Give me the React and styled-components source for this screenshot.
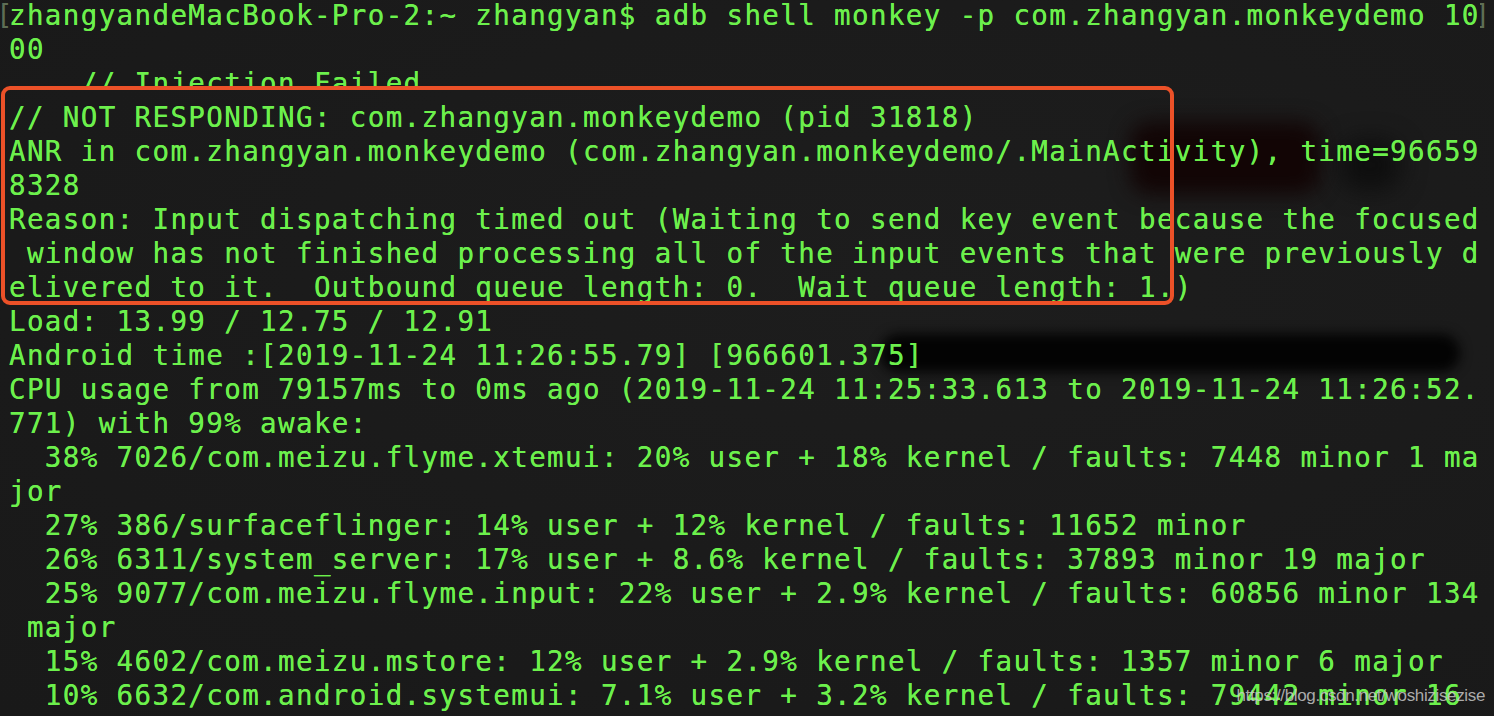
import React from "react";
import styled, { createGlobalStyle } from "styled-components";

const Global = createGlobalStyle`
  html, body { margin: 0; padding: 0; background: #1b1b1b; overflow: hidden; }
  #root { width: 1494px; height: 716px; }
`;

const Screen = styled.div`
  position: relative;
  width: 1494px;
  height: 716px;
  overflow: hidden;
  background: radial-gradient(ellipse at 60% 40%, #1d1d1d 0%, #1a1a1a 70%, #191919 100%);
`;

const Output = styled.div`
  position: relative;
  z-index: 2;
  display: flex;
  flex-direction: column;
  margin-top: -2px;
  padding-left: 9px;
  font-family: "DejaVu Sans Mono", "Liberation Mono", monospace;
  font-size: 27.5px;
  letter-spacing: 1.38px;
  line-height: 34px;
  color: #6cf04c;
  text-shadow: 0 0 0.4px #6cf04c;
`;

const Line = styled.div`
  height: 34px;
  flex: none;
  white-space: pre;
`;

const ClippedLine = styled(Line)`
  height: 22px;
  margin-bottom: 12px;
  overflow: hidden;
`;

const Bracket = styled.span`
  display: inline-block;
  width: 9px;
  overflow: hidden;
  color: #5e6e55;
  letter-spacing: 0;
  text-shadow: none;
  margin-left: ${(p) => (p.$side === "left" ? "-9px" : "0")};
  vertical-align: top;
  text-indent: ${(p) => (p.$side === "left" ? "-4px" : "-6px")};
`;

const Smudge = styled.div`
  position: absolute;
  z-index: 1;
  left: ${(p) => p.$x}px;
  top: ${(p) => p.$y}px;
  width: ${(p) => p.$w}px;
  height: ${(p) => p.$h}px;
  background: ${(p) => p.$c};
  border-radius: 20px;
  filter: blur(${(p) => p.$blur}px);
`;

const Highlight = styled.div`
  position: absolute;
  z-index: 3;
  left: 1px;
  top: 86px;
  width: 1173px;
  height: 219px;
  box-sizing: border-box;
  border: 4px solid #ec5128;
  border-radius: 9px;
  pointer-events: none;
`;

const Watermark = styled.div`
  position: absolute;
  z-index: 4;
  right: 9px;
  bottom: 10px;
  font-family: "Liberation Sans", Arial, sans-serif;
  font-size: 17px;
  letter-spacing: -0.35px;
  color: rgba(205, 205, 205, 0.82);
  white-space: nowrap;
`;

const rest = [
  "// NOT RESPONDING: com.zhangyan.monkeydemo (pid 31818)",
  "ANR in com.zhangyan.monkeydemo (com.zhangyan.monkeydemo/.MainActivity), time=96659",
  "8328",
  "Reason: Input dispatching timed out (Waiting to send key event because the focused",
  " window has not finished processing all of the input events that were previously d",
  "elivered to it.  Outbound queue length: 0.  Wait queue length: 1.)",
  "Load: 13.99 / 12.75 / 12.91",
  "Android time :[2019-11-24 11:26:55.79] [966601.375]",
  "CPU usage from 79157ms to 0ms ago (2019-11-24 11:25:33.613 to 2019-11-24 11:26:52.",
  "771) with 99% awake:",
  "  38% 7026/com.meizu.flyme.xtemui: 20% user + 18% kernel / faults: 7448 minor 1 ma",
  "jor",
  "  27% 386/surfaceflinger: 14% user + 12% kernel / faults: 11652 minor",
  "  26% 6311/system_server: 17% user + 8.6% kernel / faults: 37893 minor 19 major",
  "  25% 9077/com.meizu.flyme.input: 22% user + 2.9% kernel / faults: 60856 minor 134",
  " major",
  "  15% 4602/com.meizu.mstore: 12% user + 2.9% kernel / faults: 1357 minor 6 major",
  "  10% 6632/com.android.systemui: 7.1% user + 3.2% kernel / faults: 79442 minor 16",
];

export default function App() {
  return (
    <>
      <Global />
      <Screen>
        <Smudge $x={880} $y={334} $w={580} $h={38} $c="#030303" $blur={6} />
        <Smudge $x={1130} $y={122} $w={190} $h={72} $c="#120505" $blur={10} />
        <Smudge $x={1340} $y={140} $w={60} $h={50} $c="#0e0e0e" $blur={12} />
        <Output>
          <Line>
            <Bracket $side="left">[</Bracket>
            zhangyandeMacBook-Pro-2:~ zhangyan$ adb shell monkey -p com.zhangyan.monkeydemo 10
            <Bracket $side="right">]</Bracket>
          </Line>
          <Line>00</Line>
          <ClippedLine>{"    // Injection Failed"}</ClippedLine>
          {rest.map((t, i) => (
            <Line key={i}>{t}</Line>
          ))}
        </Output>
        <Highlight />
        <Watermark>https://blog.csdn.net/woshizisezise</Watermark>
      </Screen>
    </>
  );
}
